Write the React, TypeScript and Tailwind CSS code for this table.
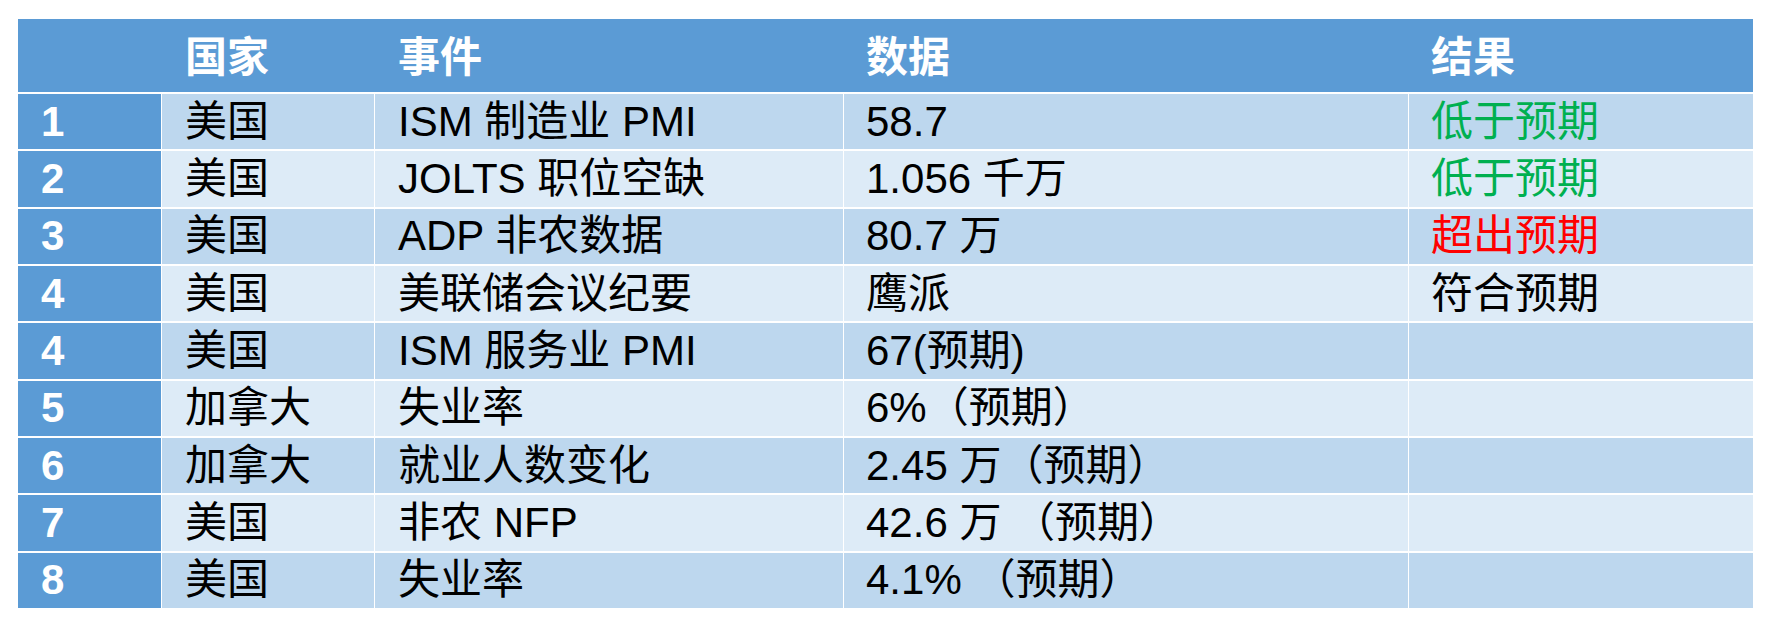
import React from "react";

type Result = { text: string; tone: "green" | "red" | "black" } | null;

const rows: { no: string; country: string; event: string; data: string; result: Result }[] = [
  { no: "1", country: "美国", event: "ISM 制造业 PMI", data: "58.7", result: { text: "低于预期", tone: "green" } },
  { no: "2", country: "美国", event: "JOLTS 职位空缺", data: "1.056 千万", result: { text: "低于预期", tone: "green" } },
  { no: "3", country: "美国", event: "ADP 非农数据", data: "80.7 万", result: { text: "超出预期", tone: "red" } },
  { no: "4", country: "美国", event: "美联储会议纪要", data: "鹰派", result: { text: "符合预期", tone: "black" } },
  { no: "4", country: "美国", event: "ISM 服务业 PMI", data: "67(预期)", result: null },
  { no: "5", country: "加拿大", event: "失业率", data: "6%（预期）", result: null },
  { no: "6", country: "加拿大", event: "就业人数变化", data: "2.45 万（预期）", result: null },
  { no: "7", country: "美国", event: "非农 NFP", data: "42.6 万 （预期）", result: null },
  { no: "8", country: "美国", event: "失业率", data: "4.1% （预期）", result: null },
];

function App() {
  return (
    <div className="min-h-screen bg-white pt-[19px] pl-[18px] font-['Liberation_Sans','Noto_Sans_CJK_SC',sans-serif] text-[42px] leading-none">
      <div className="flex w-[1735px] flex-col gap-y-[2px]">
        {/* header */}
        <div className="grid h-[73px] grid-cols-[143px_212px_468px_564px_344px] gap-x-px bg-[#5B9BD5] font-bold text-white">
          <div />
          <div className="flex items-center pl-[23px] pt-[5px]">国家</div>
          <div className="flex items-center pl-[23px] pt-[5px]">事件</div>
          <div className="flex items-center pl-[22px] pt-[5px]">数据</div>
          <div className="flex items-center pl-[22px] pt-[5px]">结果</div>
        </div>

        {rows.map((r, i) => {
          const band = i % 2 === 0 ? "bg-[#BDD7EE]" : "bg-[#DDEBF7]";
          return (
            <div key={i} className="grid h-[55.33px] grid-cols-[143px_212px_468px_564px_344px] gap-x-px bg-white">
              <div className="flex items-center bg-[#5B9BD5] pl-[23px] font-bold text-white">{r.no}</div>
              <div className={`flex items-center pl-[23px] text-black ${band}`}>{r.country}</div>
              <div className={`flex items-center whitespace-pre pl-[23px] text-black ${band}`}>{r.event}</div>
              <div className={`flex items-center whitespace-pre pl-[22px] text-black ${band}`}>{r.data}</div>
              <div
                className={`flex items-center pl-[22px] ${band} ${
                  r.result?.tone === "green"
                    ? "text-[#00B050]"
                    : r.result?.tone === "red"
                    ? "text-[#FF0000]"
                    : "text-black"
                }`}
              >
                {r.result?.text}
              </div>
            </div>
          );
        })}
      </div>
    </div>
  );
}

export default App;
